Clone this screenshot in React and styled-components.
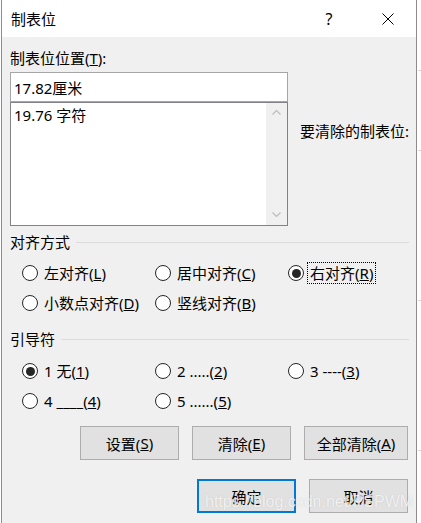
import React from 'react';
import styled, { createGlobalStyle } from 'styled-components';

const GlobalStyle = createGlobalStyle`
  html, body {
    margin: 0;
    padding: 0;
    background: #ffffff;
  }
  body {
    font-family: "Noto Sans", "Noto Sans CJK SC", sans-serif;
    font-size: 15px;
    color: #000;
  }
`;

const Page = styled.div`
  width: 421px;
  height: 523px;
  overflow: hidden;
  padding-left: 1px;
  box-sizing: border-box;
  position: relative;
  background:
    linear-gradient(#d8d8d8, #d8d8d8) 418px 70px / 3px 1px no-repeat,
    linear-gradient(#d8d8d8, #d8d8d8) 418px 150px / 3px 1px no-repeat,
    linear-gradient(#d8d8d8, #d8d8d8) 418px 300px / 3px 1px no-repeat,
    linear-gradient(#d8d8d8, #d8d8d8) 418px 450px / 3px 1px no-repeat,
    #fff;
`;

const Dialog = styled.div`
  width: 416px;
  height: 530px;
  box-sizing: border-box;
  border-left: 1px solid #8c8c8c;
  border-right: 1px solid #8c8c8c;
  background: #f0f0f0;
  display: flex;
  flex-direction: column;
`;

const TitleBar = styled.div`
  height: 37px;
  background: #fff;
  display: flex;
  align-items: center;
  padding-left: 9px;
`;

const Title = styled.div`
  font-size: 15px;
  flex: 1;
  line-height: 20px;
  margin-top: 1px;
`;

const HelpButton = styled.div`
  width: 20px;
  text-align: center;
  font-size: 16px;
  font-family: "Noto Sans", sans-serif;
  margin-right: 43px;
`;

const CloseButton = styled.div`
  width: 12px;
  height: 12px;
  margin-right: 22px;
  display: flex;
`;

const Body = styled.div`
  padding: 11px 7px 0 8px;
  display: flex;
  flex-direction: column;
`;

const TopGrid = styled.div`
  display: grid;
  grid-template-columns: 278px 1fr;
  column-gap: 12px;
`;

const Column = styled.div`
  display: flex;
  flex-direction: column;
`;

const Label = styled.div`
  line-height: 20px;
  white-space: nowrap;
  margin-top: ${p => p.$top || 0}px;
`;

const TextInput = styled.div`
  margin-top: 4px;
  height: 30px;
  box-sizing: border-box;
  border: 1px solid #a6a6a6;
  background: #fff;
  padding-left: 3px;
  display: flex;
  align-items: center;
`;

const ListBox = styled.div`
  height: 124px;
  box-sizing: border-box;
  border: 1px solid #82828a;
  background: #fff;
  display: flex;
`;

const ListItems = styled.div`
  flex: 1;
  padding: 2px 0 0 3px;
  line-height: 20px;
`;

const ScrollBar = styled.div`
  width: 21px;
  background: #f0f0f0;
  display: flex;
  flex-direction: column;
  justify-content: space-between;
  align-items: center;
  padding: 6px 0 7px;
`;

const GroupHeader = styled.div`
  display: flex;
  align-items: center;
  gap: 6px;
  line-height: 20px;
  margin-top: ${p => p.$top}px;
  &::after {
    content: '';
    flex: 1;
    height: 1px;
    background: #dcdcdc;
  }
`;

const RadioGrid = styled.div`
  display: grid;
  grid-template-columns: repeat(3, 133px);
  row-gap: 8px;
  padding-left: 12px;
  margin-top: ${p => p.$top}px;
`;

const RadioItem = styled.div`
  display: flex;
  align-items: center;
  height: 22px;
  gap: 3px;
`;

const RadioCircle = styled.div`
  width: 16px;
  height: 16px;
  box-sizing: border-box;
  border-radius: 50%;
  border: 1px solid #262626;
  background: #fff;
  display: flex;
  align-items: center;
  justify-content: center;
  flex-shrink: 0;
  &::after {
    content: '';
    width: 9px;
    height: 9px;
    border-radius: 50%;
    background: #262626;
    display: ${p => (p.$checked ? 'block' : 'none')};
  }
`;

const RadioLabel = styled.span`
  line-height: 20px;
  padding: 0 2px;
  border: 1px dotted ${p => (p.$focused ? '#000' : 'transparent')};
  white-space: nowrap;
`;

const ButtonRow = styled.div`
  display: flex;
  justify-content: flex-end;
  gap: 13px;
  margin-top: ${p => p.$top}px;
  padding-right: 1px;
`;

const Button = styled.div`
  width: ${p => p.$w}px;
  height: 34px;
  box-sizing: border-box;
  background: #e1e1e1;
  border: ${p => (p.$primary ? '2px solid #0078d7' : '1px solid #adadad')};
  display: flex;
  align-items: center;
  justify-content: center;
  white-space: nowrap;
`;

const Watermark = styled.div`
  position: absolute;
  left: 205px;
  top: 493px;
  font-family: "Liberation Sans", Arial, sans-serif;
  font-size: 16px;
  color: rgba(255, 255, 255, 0.8);
  text-shadow: 0 0 1px rgba(140, 140, 140, 0.45);
  pointer-events: none;
  white-space: nowrap;
`;

const Chevron = ({ up }) => (
  <svg width="9" height="6" viewBox="0 0 9 6">
    <path
      d={up ? 'M0.5 5.5 L4.5 1.5 L8.5 5.5' : 'M0.5 0.5 L4.5 4.5 L8.5 0.5'}
      fill="none"
      stroke="#bcbcbc"
      strokeWidth="1.2"
    />
  </svg>
);

const Radio = ({ label, checked, focused }) => (
  <RadioItem>
    <RadioCircle $checked={checked} />
    <RadioLabel $focused={focused}>{label}</RadioLabel>
  </RadioItem>
);

const ak = (pre, key, post = ')') => (
  <>
    {pre}(<u>{key}</u>{post}
  </>
);

export default function App() {
  const alignments = [
    { label: ak('左对齐', 'L') },
    { label: ak('居中对齐', 'C') },
    { label: ak('右对齐', 'R'), checked: true, focused: true },
    { label: ak('小数点对齐', 'D') },
    { label: ak('竖线对齐', 'B') },
  ];
  const leaders = [
    { label: ak('1 无', '1'), checked: true },
    { label: ak('2 .....', '2') },
    { label: ak('3 ----', '3') },
    { label: ak('4 ____', '4') },
    { label: ak('5 ......', '5') },
  ];

  return (
    <Page>
      <GlobalStyle />
      <Dialog>
        <TitleBar>
          <Title>制表位</Title>
          <HelpButton>?</HelpButton>
          <CloseButton>
            <svg width="12" height="12" viewBox="0 0 12 12">
              <path d="M0.5 0.5 L11.5 11.5 M11.5 0.5 L0.5 11.5" stroke="#000" strokeWidth="1" />
            </svg>
          </CloseButton>
        </TitleBar>
        <Body>
          <TopGrid>
            <Column>
              <Label>制表位位置(<u>T</u>):</Label>
              <TextInput>17.82厘米</TextInput>
              <ListBox>
                <ListItems>19.76 字符</ListItems>
                <ScrollBar>
                  <Chevron up />
                  <Chevron />
                </ScrollBar>
              </ListBox>
            </Column>
            <Column>
              <Label $top={73}>要清除的制表位:</Label>
            </Column>
          </TopGrid>

          <GroupHeader $top={6}>对齐方式</GroupHeader>
          <RadioGrid $top={10}>
            {alignments.map((a, i) => (
              <Radio key={i} {...a} />
            ))}
          </RadioGrid>

          <GroupHeader $top={15}>引导符</GroupHeader>
          <RadioGrid $top={11}>
            {leaders.map((a, i) => (
              <Radio key={i} {...a} />
            ))}
          </RadioGrid>

          <ButtonRow $top={14}>
            <Button $w={99}>{ak('设置', 'S')}</Button>
            <Button $w={99}>{ak('清除', 'E')}</Button>
            <Button $w={104}>{ak('全部清除', 'A')}</Button>
          </ButtonRow>
          <ButtonRow $top={19}>
            <Button $w={99} $primary>确定</Button>
            <Button $w={99}>取消</Button>
          </ButtonRow>
        </Body>
      </Dialog>
      <Watermark>https://blog.csdn.net/PSPWM</Watermark>
    </Page>
  );
}
